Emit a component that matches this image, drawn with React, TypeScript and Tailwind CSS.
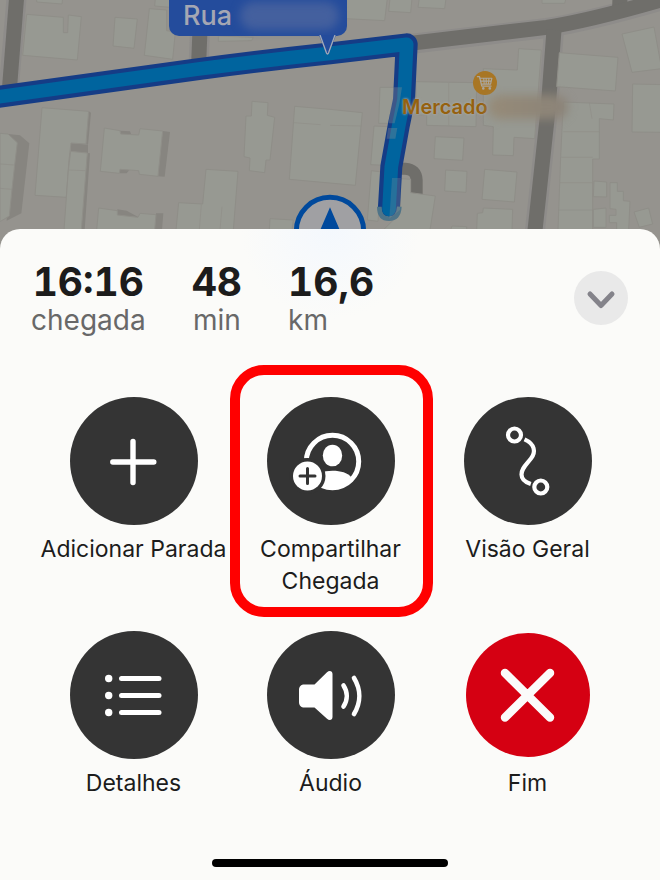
import type { ReactNode } from "react";

interface Stat {
    value: string;
    unit: string;
}

interface Action {
    id: string;
    label: string;
    icon: ReactNode;
    danger?: boolean;
    highlighted?: boolean;
}

const stats: Stat[] = [
    { value: "16:16", unit: "chegada" },
    { value: "48", unit: "min" },
    { value: "16,6", unit: "km" },
];

// Building footprints, in map units (3 units = 1px)
const westBuildings = [
    "80,43 190,52 190,98 203,98 205,45 244,50 232,180 68,166",
    "345,52 412,57 402,145 339,138",
    "448,26 500,30 500,92 526,96 518,178 433,166",
    "110,-5 188,-5 186,12 110,6",
    "466,-5 510,-5 510,22 464,18",
    "655,108 760,112 755,122 655,124",
    "126,323 266,334 258,432 213,429 207,480 199,592 105,586",
    "212,454 262,459 244,690 192,690 205,510",
    "0,400 24,402 52,428 44,495 36,568 28,648 0,665",
    "313,384 360,392 362,402 416,405 420,386 488,393 474,529 418,523 416,512 360,508 358,520 301,514",
    "756,304 804,308 802,346 824,352 810,480 798,480 794,518 748,512 750,474 732,470 738,348 754,348",
    "884,319 990,328 1087,338 1066,556 868,538",
    "618,508 714,514 700,690 528,690 536,608 608,612",
    "296,624 352,632 352,645 414,652 420,640 468,644 464,690 290,690",
    "810,656 880,660 876,690 808,690",
];

const eastBuildings = [
    "50,-5 172,-5 164,62 48,56",
    "180,-5 246,-5 242,38 176,34",
    "268,-5 348,-5 344,26 264,22",
    "636,-5 708,-5 704,10 636,10",
    "566,146 634,150 614,416 552,412 550,467 488,465 490,380 460,376 460,206 562,210",
    "258,245 440,248 438,380 290,376 290,345 258,345",
    "150,262 216,262 192,370 146,370",
    "132,378 176,380 164,496 122,494",
    "316,410 402,414 398,481 312,476",
    "347,510 411,514 408,577 344,573",
    "464,508 561,516 553,606 456,598",
    "460,624 548,628 546,690 440,690 442,640 458,638",
    "124,512 156,516 144,664 112,660",
    "180,534 242,538 242,578 316,588 300,690 160,690 210,640 212,560",
    "688,158 864,172 856,273 680,260",
    "876,102 972,81 995,206 906,217",
    "908,252 1000,254 1000,397 906,396",
    "700,306 852,312 850,360 808,356 808,477 788,477 788,690 684,690 692,470",
    "792,543 830,546 830,591 790,590",
    "790,628 828,624 828,682 790,682",
    "840,548 862,548 862,574 880,574 880,602 900,604 896,690 860,690 860,668 838,668 838,646 858,646 858,628 840,626",
    "912,636 956,624 968,672 928,682",
    "366,678 410,680 410,690 362,690",
];

const seams =
    "M207,510 L256,512 M0,492 L44,495 M0,565 L36,568 M604,614 L598,690 M666,620 L660,690 M880,368 L962,374 M1346,248 V376 M990,376 L1086,378 M1690,395 H1798 M1684,472 H1778 M1680,548 H1778 M1676,630 H1778 M1768,308 L1776,356";

function MapView() {
    return (
        <svg
            className="block h-full w-full"
            viewBox="0 0 1980 750"
            preserveAspectRatio="xMidYMin slice"
            aria-hidden="true"
        >
            <rect width="1980" height="750" fill="#95938e" />

            {/* Streets */}
            <g fill="none" stroke="#8e8c8a" strokeWidth="60">
                <path d="M50,-10 L26,270" />
                <path d="M600,90 L596,190" />
                <path d="M1230,132 L1640,84 Q1770,64 1990,0" />
                <path d="M1662,90 L1644,330 L1604,700" />
            </g>
            <g fill="none" stroke="#6f6e6a" strokeWidth="45">
                <path d="M50,-10 L28,270" />
                <path d="M600,90 L596,190" />
                <path d="M1860,-10 L1858,50" />
                <path d="M1230,130 L1640,82 Q1770,62 1990,-2" />
                <path d="M1662,90 L1644,330 L1604,700" />
                <path d="M1196,506 H1216 Q1248,508 1250,540 V590" strokeWidth="36" />
            </g>

            {/* Building shadows */}
            <g fill="#878580">
                <path d="M24,402 L60,406 L88,430 L64,640 L20,662 Z" />
                <path d="M488,393 L510,396 L494,530 L474,529 Z" />
                <path d="M266,334 L273,338 L264,434 L258,432 Z M262,459 L270,460 L254,690 L244,690 Z" />
                <path d="M213,429 L264,434 V459 L212,454 Z" />
                <path d="M360,392 L390,394 L394,404 L362,402 Z M360,508 L390,508 L380,520 H360 Z" />
                <path d="M352,628 L380,632 L416,652 L352,645 Z M468,640 L490,640 L486,690 L464,690 Z" />
            </g>

            <g fill="#979992" stroke="#8f8e88" strokeWidth="3" strokeLinejoin="round">
                {westBuildings.map((points) => (
                    <polygon key={points} points={points} />
                ))}
                <g transform="translate(990 0)">
                    {eastBuildings.map((points) => (
                        <polygon key={points} points={points} />
                    ))}
                </g>
            </g>
            <path d={seams} fill="none" stroke="#8f8e88" strokeWidth="2" />

            {/* Route */}
            <g fill="none" strokeLinejoin="round" strokeLinecap="round">
                <path
                    d="M-30,294 L590,208 Q800,180 990,160 L1220,133 L1212,300 L1196,378 L1174,500 L1167,620"
                    stroke="#153c86"
                    strokeWidth="66"
                />
                <path d="M1138,620 Q1138,656 1167,656 Q1196,656 1198,620" stroke="#4f7488" strokeWidth="14" strokeLinecap="butt" />
                <path
                    d="M-30,294 L590,208 Q800,180 990,160 L1220,133 L1212,300 L1196,378 L1174,500 L1167,628"
                    stroke="#00649e"
                    strokeWidth="41"
                />
            </g>
            {/* Buildings drawn translucent over the route */}
            <g fill="#979992">
                <polygon points="1180,262 1206,262 1198,312 1184,370 1166,370" fillOpacity="0.3" />
                <polygon points="1164,384 1192,384 1186,416 1160,416" fillOpacity="0.3" />
                <polygon points="1176,534 1202,534 1200,630 1168,656" fillOpacity="0.25" />
            </g>

            {/* Current position */}
            <circle cx="990" cy="693" r="101" fill="#a0a0a3" stroke="#00499c" strokeWidth="15" />
            <path d="M990,622 L1046,752 L990,728 L934,752 Z" fill="#00499c" />
        </svg>
    );
}

function CartPin() {
    return (
        <svg className="size-6" viewBox="0 0 24 24" aria-hidden="true">
            <circle cx="12" cy="12" r="12" fill="#a87624" />
            <g fill="none" stroke="#a9a69f" strokeLinecap="round" strokeLinejoin="round">
                <path d="M4.5 5.7h2l2.3 9.4h9.3" strokeWidth="1.3" />
                <path d="M7 7.2h11.9l-1.3 5.9H8.4M7.6 10.1h10.7M10.7 7.2l.5 5.8M13.2 7.2v5.8M15.9 7.2l-.4 5.8" strokeWidth="1.1" />
            </g>
            <circle cx="10.3" cy="17.4" r="1.3" fill="#a9a69f" />
            <circle cx="16.8" cy="17.4" r="1.3" fill="#a9a69f" />
        </svg>
    );
}

function PlusIcon() {
    return (
        <svg className="size-full" viewBox="0 0 128 128" fill="none" stroke="white" strokeWidth="5.4" strokeLinecap="round" aria-hidden="true">
            <path d="M63 44.5v41M42.8 65h41" />
        </svg>
    );
}

function ShareArrivalIcon() {
    return (
        <svg className="size-full" viewBox="0 0 128 128" aria-hidden="true">
            <circle cx="65.5" cy="64.5" r="26.2" fill="none" stroke="white" strokeWidth="5" />
            <ellipse cx="65.5" cy="58.5" rx="9.7" ry="10.8" fill="white" />
            <path d="M46.5 82.5C49 76.5 56 73.8 65.5 73.8c8.5 0 15 2.2 18.5 6.2A27 27 0 0 1 65.5 92.5c-8 0-14.5-3.5-19-10z" fill="white" />
            {/* Gap between the person and the badge */}
            <path d="M34 61.5h12.5v10H34z" fill="#343434" />
            <circle cx="40.5" cy="79" r="18" fill="#343434" />
            <circle cx="40.5" cy="79" r="14.5" fill="white" />
            <path d="M40.5 71.5v15M33 79h15" stroke="#343434" strokeWidth="3" strokeLinecap="round" />
        </svg>
    );
}

function RouteIcon() {
    return (
        <svg className="size-full" viewBox="0 0 128 128" fill="none" stroke="white" strokeWidth="4.2" aria-hidden="true">
            <circle cx="50.5" cy="38" r="6.5" />
            <circle cx="76.8" cy="90" r="6.5" />
            <path d="M60.5 42.3C71 47 72 55 67 61.5c-5 6.5-9.5 10-9.5 16 0 4 3 7.5 9.3 9.5" />
        </svg>
    );
}

function ListIcon() {
    return (
        <svg className="size-full" viewBox="0 0 128 128" fill="white" aria-hidden="true">
            {[47.5, 64.5, 81.5].map((y) => (
                <g key={y}>
                    <circle cx="38.7" cy={y} r="3.7" />
                    <path d={`M51.5 ${y}h37.5`} stroke="white" strokeWidth="5" strokeLinecap="round" />
                </g>
            ))}
        </svg>
    );
}

function SpeakerIcon() {
    return (
        <svg className="size-full" viewBox="0 0 128 128" fill="none" stroke="white" strokeLinecap="round" aria-hidden="true">
            <path
                d="M37.5 53.5h10l12.5-12.2c2.3-2.2 5.5-1.5 5.5 1.7v43c0 3.2-3.2 3.9-5.5 1.7L47.5 76.5h-10c-3.5 0-5.5-2-5.5-5.5V59c0-3.5 2-5.5 5.5-5.5z"
                fill="white"
                stroke="none"
            />
            <path d="M76.5 54.5c4.3 6.5 4.3 14.5 0 21" strokeWidth="4.6" />
            <path d="M87 47c7 11.5 7 24.5 0 36" strokeWidth="4.6" />
        </svg>
    );
}

function CloseIcon() {
    return (
        <svg className="size-full" viewBox="0 0 124 124" fill="none" stroke="#fbfbfa" strokeWidth="8.5" strokeLinecap="round" aria-hidden="true">
            <path d="M39 40l45 44.5M84 40l-45 44.5" />
        </svg>
    );
}

const actions: Action[] = [
    { id: "add-stop", label: "Adicionar Parada", icon: <PlusIcon /> },
    { id: "share", label: "Compartilhar Chegada", icon: <ShareArrivalIcon />, highlighted: true },
    { id: "overview", label: "Visão Geral", icon: <RouteIcon /> },
    { id: "details", label: "Detalhes", icon: <ListIcon /> },
    { id: "audio", label: "Áudio", icon: <SpeakerIcon /> },
    { id: "end", label: "Fim", icon: <CloseIcon />, danger: true },
];

function ActionButton({ action }: { action: Action }) {
    return (
        <div className="relative">
            <button type="button" className="flex w-full flex-col items-center gap-2">
                <span className="flex size-32 items-center justify-center">
                    <span
                        className={
                            action.danger
                                ? "size-[124px] rounded-full bg-[#d50012]"
                                : "size-32 rounded-full bg-[#343434]"
                        }
                    >
                        {action.icon}
                    </span>
                </span>
                <span className="max-w-[190px] text-[23px] leading-8 text-[#1c1c1c]">{action.label}</span>
            </button>
            {action.highlighted && (
                <div className="pointer-events-none absolute -top-8 -right-1 -bottom-5 -left-0.5 rounded-[34px] border-10 border-[#ff0000]" />
            )}
        </div>
    );
}

export default function App() {
    return (
        <main className="flex min-h-screen flex-col overflow-hidden bg-[#95938e] font-['Inter',sans-serif]">
            <div className="relative h-[250px] overflow-hidden">
                <MapView />

                {/* Street callout */}
                <div className="absolute top-0 left-[169px] flex h-9 w-[178px] items-center rounded-b-[10px] bg-[#244c9c] pl-[14px]">
                    <span className="pb-1 text-[27px] leading-8 font-medium text-[#a4a7b3]">Rua</span>
                    <span className="mr-2 mb-1 ml-2 h-7 flex-1 rounded-full bg-[#44609e] blur-[5px]" />
                    <svg className="absolute top-[35px] left-[150px] h-5 w-[18px]" viewBox="0 0 18 20" aria-hidden="true">
                        <path d="M0 0L7 18Q8.5 20 10 18L17 0z" fill="#244c9c" />
                        <path d="M1 0l6.5 18q1 2 2 0L16 0" fill="none" stroke="#a5abb8" strokeWidth="1.3" />
                    </svg>
                </div>

                {/* Market pin */}
                <div className="absolute top-[71px] left-[402px]">
                    <div className="ml-[71px]">
                        <CartPin />
                    </div>
                    <div className="flex items-center">
                        <span className="text-[20px] leading-6 font-semibold text-[#95610f] [text-shadow:0_0_3px_#aaa8a3,0_0_2px_#aaa8a3]">
                            Mercado
                        </span>
                        <span className="h-6 w-20 rounded-full bg-linear-to-r from-[#968b78] to-[#8b8378] blur-[5px]" />
                    </div>
                </div>
            </div>

            <section className="relative -mt-[21px] flex flex-1 flex-col rounded-t-[20px] bg-[#fbfbf9] bg-[radial-gradient(circle_at_50%_0,#f4f8fd_0,#fbfbf900_90px)]">
                <header className="flex items-start justify-between pt-[33px] pr-8 pl-[31px]">
                    <dl className="flex gap-[46px]">
                        {stats.map((stat) => (
                            <div key={stat.unit} className="flex flex-col-reverse items-center last:items-start">
                                <dt className="text-[28px] leading-9 text-[#686868]">{stat.unit}</dt>
                                <dd className="text-[39px] leading-10 font-bold text-[#1c1c1c] tabular-nums">{stat.value}</dd>
                            </div>
                        ))}
                    </dl>
                    <button
                        type="button"
                        aria-label="Recolher"
                        className="mt-[9px] flex size-[54px] items-center justify-center rounded-full bg-[#e9e9e9]"
                    >
                        <svg className="size-8" viewBox="0 0 32 32" fill="none" stroke="#84838a" strokeWidth="5" strokeLinecap="round" strokeLinejoin="round" aria-hidden="true">
                            <path d="M5 12l11 11.5L27 12" />
                        </svg>
                    </button>
                </header>

                <div className="mt-[59px] grid grid-cols-3 gap-y-[34px] pr-[34px] pl-[35px]">
                    {actions.map((action) => (
                        <ActionButton key={action.id} action={action} />
                    ))}
                </div>

                <div className="mx-auto mt-auto mb-[13px] h-2 w-[236px] rounded-full bg-black" />
            </section>
        </main>
    );
}
